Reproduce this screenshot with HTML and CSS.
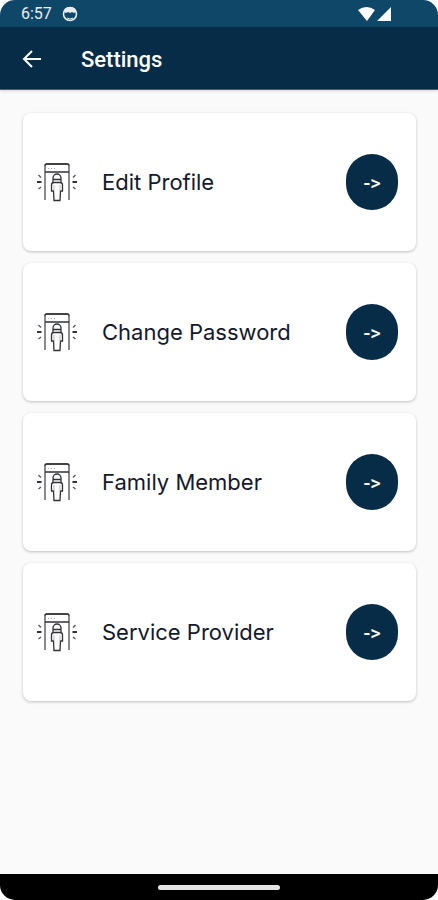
FILE: index.html
```html
<!DOCTYPE html>
<html lang="en">
<head>
<meta charset="utf-8">
<meta name="viewport" content="width=device-width, initial-scale=1">
<title>Settings</title>
<link rel="stylesheet" href="styles.css">
</head>
<body>
<svg class="symbols" aria-hidden="true">
  <symbol id="gate" viewBox="0 0 40 40">
    <g fill="none" stroke="#303236" stroke-width="1.3">
      <path d="M8 38V4Q8 2 10 2H30Q32 2 32 4V38" stroke="#4a4c50"/>
      <path d="M8 3.500Q8 2 10 2H30Q32 2 32 3.500M8 10H32"/>
      <path d="M11 6.500H19" stroke="#aaa" stroke-width="1" stroke-dasharray="1 2"/>
      <path d="M16 20V16A4 4 0 0 1 24 16V20M16.500 17.500H23.500" />
      <path d="M17 20.500H23Q25.500 20.500 25.500 23V29H23.500L23 38.500H17L16.500 29H14.500V23Q14.500 20.500 17 20.500Z"/>
      <path d="M17 23V29M23 23V29" stroke="#aaa" stroke-width="0.800"/>
      <path d="M1.500 13L4 15.500M1.500 27L4 25M38.500 13L36 15.500M38.500 27L36 25" stroke="#555"/>
      <path d="M0 20H4.500M35.500 20H40" stroke-width="1.800"/>
    </g>
  </symbol>
</svg>
<div class="screen">
  <div class="status">
    <span class="time">6:57</span>
    <svg class="face" viewBox="0 0 16 16" aria-hidden="true">
      <circle cx="8" cy="8" r="6.500" fill="none" stroke="#e8edf1" stroke-width="1.600"/>
      <path d="M2 6Q2 1 8 1T14 6L12 7L10 6L8 7L6 6L4 7Z" fill="#e8edf1"/>
      <path d="M5 12Q8 14 11 12" fill="none" stroke="#e8edf1"/>
    </svg>
    <svg class="signal" viewBox="0 0 34 16" aria-hidden="true">
      <path d="M0 4Q8.500 -2 17 4L9 15ZM19 15L33 1V15Z" fill="#fff"/>
    </svg>
  </div>
  <header class="bar">
    <button class="back" type="button" aria-label="Back">
      <svg viewBox="0 0 20 20" aria-hidden="true"><path d="M19 9H2.500M10 1L2 9L10 17" fill="none" stroke="#fff" stroke-width="2"/></svg>
    </button>
    <h1>Settings</h1>
  </header>
  <main class="list">
    <section class="card"><svg class="icon" aria-hidden="true"><use href="#gate"/></svg><h2>Edit Profile</h2><button class="go" type="button" aria-label="Edit Profile">-&gt;</button></section>
    <section class="card"><svg class="icon" aria-hidden="true"><use href="#gate"/></svg><h2>Change Password</h2><button class="go" type="button" aria-label="Change Password">-&gt;</button></section>
    <section class="card"><svg class="icon" aria-hidden="true"><use href="#gate"/></svg><h2>Family Member</h2><button class="go" type="button" aria-label="Family Member">-&gt;</button></section>
    <section class="card"><svg class="icon" aria-hidden="true"><use href="#gate"/></svg><h2>Service Provider</h2><button class="go" type="button" aria-label="Service Provider">-&gt;</button></section>
  </main>
  <footer class="nav"><span class="handle"></span></footer>
</div>
</body>
</html>
```
FILE: styles.css
```css
* { box-sizing: border-box; }
body { margin: 0; background: #fff; font-family: Roboto, sans-serif; }
.symbols { display: none; }
.screen {
  display: flex;
  flex-direction: column;
  min-height: 100vh;
  overflow: hidden;
  border-radius: 15px;
  background: #fafafa;
}
.status {
  display: flex;
  align-items: center;
  height: 27px;
  padding: 1px 46px 0 21px;
  background: #0f4768;
  color: #e8edf1;
}
.time { font-size: 16px; line-height: 20px; }
.face { width: 16px; height: 16px; margin-left: 10px; }
.signal { width: 34px; height: 16px; margin-left: auto; }
.bar {
  display: flex;
  align-items: center;
  gap: 39px;
  height: 63px;
  padding: 4px 22px 0;
  border-bottom: 1px solid #57566d;
  background: #072c47;
  box-shadow: 0 1px 3px rgba(0, 0, 0, 0.15);
  color: #fff;
}
.back { display: flex; padding: 0; border: 0; background: none; }
.back svg { width: 20px; height: 20px; }
h1 { margin: 0; font-size: 22px; line-height: 28px; font-weight: 500; }
.list {
  display: flex;
  flex: 1;
  flex-direction: column;
  gap: 12px;
  padding: 23px 22px 23px 23px;
}
.card {
  display: flex;
  align-items: center;
  height: 138px;
  padding: 0 18px 0 14px;
  border-radius: 8px;
  background: #fff;
  box-shadow: 0 1px 3px rgba(0, 0, 0, 0.24);
}
.icon { flex: none; width: 40px; height: 40px; }
h2 {
  flex: 1;
  margin: 0 0 0 25px;
  color: #14182c;
  font: 400 22px/28px Inter, sans-serif;
}
.go {
  width: 52px;
  height: 56px;
  padding: 2px 0 0;
  border: 0;
  border-radius: 26px;
  background: #072c47;
  color: #fff;
  font: 500 20px/24px Roboto, sans-serif;
}
.nav {
  display: flex;
  align-items: center;
  justify-content: center;
  height: 26px;
  background: #000;
}
.handle { width: 28%; height: 5px; border-radius: 3px; background: #e4e4e4; }
```
